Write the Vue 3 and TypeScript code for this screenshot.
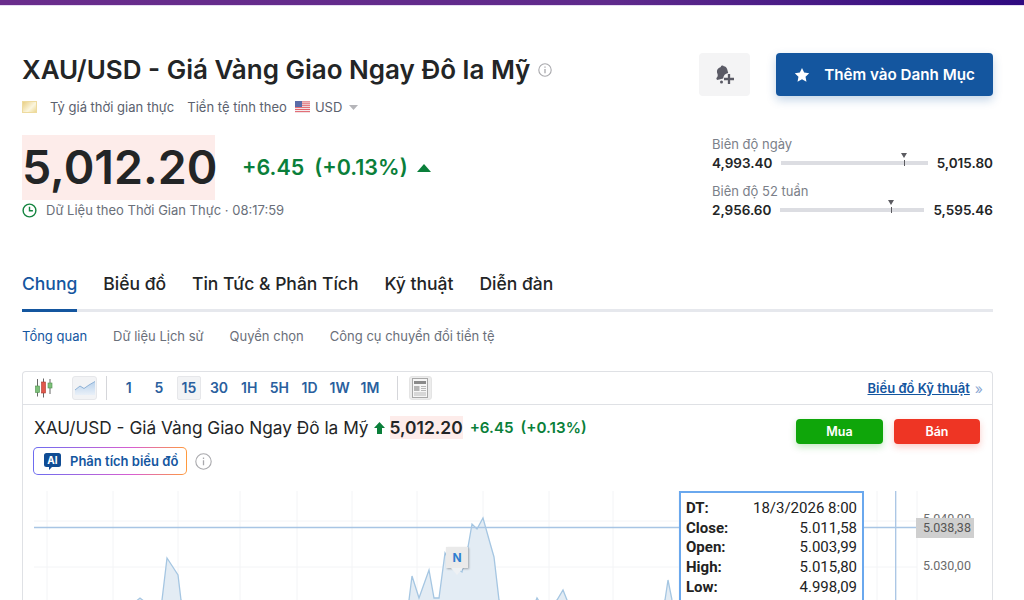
<script setup lang="ts">
const tabs: string[] = ['Chung', 'Biểu đồ', 'Tin Tức & Phân Tích', 'Kỹ thuật', 'Diễn đàn']
const subtabs: string[] = ['Tổng quan', 'Dữ liệu Lịch sử', 'Quyền chọn', 'Công cụ chuyển đổi tiền tệ']
const periods: string[] = ['1', '5', '15', '30', '1H', '5H', '1D', '1W', '1M']
const ranges = [
  { label: 'Biên độ ngày', low: '4,993.40', high: '5,015.80', pos: 84 },
  { label: 'Biên độ 52 tuần', low: '2,956.60', high: '5,595.46', pos: 77 },
]
const tip = [
  ['DT:', '18/3/2026 8:00'],
  ['Close:', '5.011,58'],
  ['Open:', '5.003,99'],
  ['High:', '5.015,80'],
  ['Low:', '4.998,09'],
  ['Vol:', '0'],
]
const vgrid: number[] = [47, 113, 178, 240, 297, 352, 417, 483, 549, 613, 679, 745, 811, 877]
const chartTop = 491
const pts: number[][] = [
  [128, 612], [134, 603], [140, 598], [145, 602], [150, 612], [158, 612], [162, 600], [167, 558], [178, 575], [181, 600], [184, 615],
  [400, 615], [409, 600], [412, 576], [419, 598], [429, 570], [434, 598], [439, 598], [445, 553], [452, 565], [462, 572], [468, 547],
  [472, 524], [477, 529], [483, 518], [490, 543], [494, 557], [499, 600], [502, 615],
  [530, 615], [537, 598], [542, 606], [550, 606], [557, 600], [563, 590], [567, 600], [572, 615],
  [660, 615], [665, 600], [668, 580], [672, 600], [676, 615],
]
const line: string = pts.map((p) => `${p[0] - 23},${p[1] - chartTop}`).join(' ')
</script>

<template>
  <div class="page">
    <div class="topbar"></div>
    <div class="content">
      <header class="header">
        <div class="head-left">
          <div class="title-row">
            <h1 class="title">XAU/USD - Giá Vàng Giao Ngay Đô la Mỹ</h1>
            <svg class="info" width="14" height="14" viewBox="0 0 14 14" fill="none" stroke="#a9a9ad">
              <circle cx="7" cy="7" r="6.2" stroke-width="1.1" />
              <path d="M7 6v4.2M7 3.6v1.2" stroke-width="1.3" />
            </svg>
          </div>
          <div class="meta">
            <span class="gold"></span>
            <span class="meta-a">Tỷ giá thời gian thực</span>
            <span class="meta-b">Tiền tệ tính theo</span>
            <svg class="flag" width="15" height="12" viewBox="0 0 15 12">
              <rect width="15" height="12" fill="#f3eef0" />
              <path d="M0 .9h15M0 2.8h15M0 4.7h15M0 6.6h15M0 8.5h15M0 10.6h15" stroke="#e2626a" stroke-width="1" />
              <rect width="7" height="6" fill="#5a6ba8" />
            </svg>
            <span class="cur">USD</span>
            <svg class="caret" width="9" height="5" viewBox="0 0 9 5"><path d="M0 0h9L4.5 5z" fill="#b5b5b9" /></svg>
          </div>
          <div class="price-row">
            <span class="price">5,012.20</span>
            <span class="chg">+6.45</span>
            <span class="chg pct">(+0.13%)</span>
            <svg class="up" width="14" height="8" viewBox="0 0 14 8"><path d="M7 0l7 8H0z" fill="#0a7f3a" /></svg>
          </div>
          <div class="time">
            <svg width="15" height="15" viewBox="0 0 15 15" fill="none" stroke="#13843f" stroke-width="1.4">
              <circle cx="7.5" cy="7.5" r="6.4" />
              <path d="M7.5 3.8v4h3.4" />
            </svg>
            <span>Dữ Liệu theo Thời Gian Thực · 08:17:59</span>
          </div>
        </div>
        <div class="head-right">
          <div class="actions">
            <button class="bell" type="button">
              <svg width="20" height="20" viewBox="0 0 20 20" fill="#5b5b66">
                <path d="M6 .5c.8-.3 1.500 0 1.800.8 1.800.2 3 1.400 3.400 3l1 3.700a6 6 0 0 0-5 5.500L1 15l-.7-1.800c1.200-1 1.700-2.200 1.300-3.900L1 7.500C.6 5 1.600 3.300 4.800 2c0-.7.500-1.300 1.200-1.500z" />
                <circle cx="5.500" cy="17" r="1.500" />
                <path d="M13 9v10M8 14h10" stroke="#5b5b66" stroke-width="2.300" fill="none" />
              </svg>
            </button>
            <button class="watch" type="button">
              <svg width="16" height="16" viewBox="0 0 24 24" fill="#fff">
                <path d="M12 1.500l3.300 6.900 7.500 1-5.500 5.200 1.400 7.500L12 18.500l-6.700 3.600 1.400-7.500L1.200 9.400l7.500-1z" />
              </svg>
              <span>Thêm vào Danh Mục</span>
            </button>
          </div>
          <div class="ranges">
            <div v-for="r in ranges" :key="r.label" class="range">
              <div class="range-label">{{ r.label }}</div>
              <div class="range-row">
                <b>{{ r.low }}</b>
                <div class="bar">
                  <span class="marker" :style="{ left: r.pos + '%' }"></span>
                  <span class="tick" :style="{ left: r.pos + '%' }"></span>
                </div>
                <b>{{ r.high }}</b>
              </div>
            </div>
          </div>
        </div>
      </header>

      <nav class="tabs">
        <a v-for="(t, i) in tabs" :key="t" class="tab" :class="{ active: i === 0 }">{{ t }}</a>
      </nav>
      <nav class="subtabs">
        <a v-for="(t, i) in subtabs" :key="t" class="subtab" :class="{ active: i === 0 }">{{ t }}</a>
      </nav>

      <section class="box">
        <div class="toolbar">
          <svg class="candles" width="20" height="20" viewBox="0 0 20 20">
            <path d="M3.500 1v17.500M9.500 .5v19M16 1v15" stroke="#666" stroke-width="1" />
            <rect x="1.500" y="8" width="4" height="6.500" fill="#7dc07a" stroke="#4d8f4b" stroke-width=".6" />
            <rect x="7.500" y="4" width="4" height="11" fill="#e2574c" stroke="#a8392f" stroke-width=".6" />
            <rect x="14" y="5" width="4" height="5" fill="#7dc07a" stroke="#4d8f4b" stroke-width=".6" />
          </svg>
          <span class="area-btn">
            <svg width="20" height="14" viewBox="0 0 20 14">
              <defs>
                <linearGradient id="areaFill" x1="0" y1="0" x2="0" y2="1">
                  <stop offset="0" stop-color="#b9d2ec" />
                  <stop offset="1" stop-color="#e9f0f8" />
                </linearGradient>
              </defs>
              <path d="M0 9l5-4 4 2.500 5-3.500 6-3.500V14H0z" fill="url(#areaFill)" />
              <path d="M0 9l5-4 4 2.500 5-3.500 6-3.500" fill="none" stroke="#8fb2d6" />
            </svg>
          </span>
          <span class="sep first"></span>
          <div class="periods">
            <span v-for="p in periods" :key="p" class="period" :class="{ on: p === '15' }">{{ p }}</span>
          </div>
          <span class="sep"></span>
          <span class="news-btn">
            <svg width="16" height="20" viewBox="0 0 16 20">
              <rect x=".5" y=".5" width="15" height="19" fill="#f6f6f6" stroke="#a8a8a8" />
              <rect x="2" y="3" width="12" height="3" fill="#8a8a8a" />
              <rect x="2" y="8" width="5.500" height="5" fill="#b5b5b5" />
              <path d="M9 8.500h5M9 10.500h5M9 12.500h5M2 15h12M2 17h12" stroke="#b8b8b8" />
            </svg>
          </span>
          <a class="tech-link">Biểu đồ Kỹ thuật</a>
          <span class="chev">»</span>
        </div>
        <div class="chart-head">
          <div class="ch-left">
            <div class="ch-title">
              <span class="ch-name">XAU/USD - Giá Vàng Giao Ngay Đô la Mỹ</span>
              <svg width="11" height="12" viewBox="0 0 11 12"><path d="M5.500 0L11 6H8v6H3V6H0z" fill="#0a7f3a" /></svg>
              <span class="ch-price">5,012.20</span>
              <span class="ch-chg">+6.45</span>
              <span class="ch-chg">(+0.13%)</span>
            </div>
            <div class="ai-row">
              <button class="ai" type="button">
                <svg width="17" height="17" viewBox="0 0 17 17">
                  <path d="M2.500 0h12A2.500 2.500 0 0 1 17 2.500v9a2.500 2.500 0 0 1-2.500 2.500H8l-3 3v-3H2.500A2.500 2.500 0 0 1 0 11.500v-9A2.500 2.500 0 0 1 2.500 0z" fill="#0f4c94" />
                  <text x="8.500" y="10.800" text-anchor="middle" fill="#fff" font-size="10" font-weight="700" font-family="Inter, sans-serif">AI</text>
                </svg>
                <span>Phân tích biểu đồ</span>
              </button>
              <svg width="17" height="17" viewBox="0 0 17 17" fill="none" stroke="#a9a9ad">
                <circle cx="8.500" cy="8.500" r="7.700" stroke-width="1.100" />
                <path d="M8.500 7.300v5M8.500 4.400v1.500" stroke-width="1.300" />
              </svg>
            </div>
          </div>
          <div class="trade">
            <button class="buy" type="button">Mua</button>
            <button class="sell" type="button">Bán</button>
          </div>
        </div>
        <div class="chart">
          <svg class="plot" width="969" height="110" viewBox="0 0 969 110">
            <g stroke="#f3f4f6" stroke-width="1">
              <line v-for="x in vgrid" :key="x" :x1="x - 23" :x2="x - 23" y1="0" y2="110" />
              <line x1="11" x2="894" y1="30" y2="30" />
              <line x1="11" x2="894" y1="76" y2="76" />
              <line x1="894" x2="894" y1="0" y2="110" />
            </g>
            <polygon :points="line" fill="#e3ecf4" stroke="#a5c6e2" stroke-width="1.300" />
            <line x1="11" x2="894" y1="36.500" y2="36.500" stroke="#a8c5e4" stroke-width="1.300" />
            <line x1="872.700" x2="872.700" y1="0" y2="110" stroke="#a8c5e4" stroke-width="1.300" />
          </svg>
          <div class="flag-n"><span>N</span></div>
          <span class="axis a1">5.040,00</span>
          <span class="axis a2">5.030,00</span>
          <span class="axis now">5.038,38</span>
          <div class="tooltip">
            <div v-for="row in tip" :key="row[0]" class="tip-row">
              <b>{{ row[0] }}</b><span>{{ row[1] }}</span>
            </div>
          </div>
        </div>
      </section>
    </div>
  </div>
</template>

<style scoped>
.page {
  width: 1024px;
  height: 600px;
  overflow: hidden;
  background: #fff;
  font-family: Inter, "Noto Sans", sans-serif;
  color: #232526;
}
.topbar {
  height: 5px;
  background: linear-gradient(90deg, #6a2d8c 0%, #5f2a8c 60%, #2f0a80 100%);
  box-shadow: 0 1px 0 #e6dcf2;
}
.content {
  padding: 0 31px 0 22px;
}
.header {
  display: flex;
  justify-content: space-between;
  height: 220px;
}
.title-row {
  display: flex;
  align-items: center;
  gap: 8px;
  margin-top: 47px;
  height: 36px;
}
.title {
  margin: 0;
  font-size: 26px;
  line-height: 36px;
  font-weight: 600;
}
.meta {
  display: flex;
  align-items: center;
  margin-top: 7px;
  height: 24px;
  font-size: 13px;
  color: #5b616e;
}
.gold {
  width: 15px;
  height: 12px;
  background: linear-gradient(135deg, #e9cf85 0%, #fbf6df 60%, #ecd894 100%);
  border: 1px solid #eedb9f;
  box-sizing: border-box;
}
.meta-a {
  margin-left: 13px;
}
.meta-b {
  margin-left: 13px;
}
.flag {
  margin-left: 8px;
}
.cur {
  margin-left: 5px;
}
.caret {
  margin-left: 7px;
}
.price-row {
  display: flex;
  align-items: center;
  margin-top: 16px;
  height: 65px;
}
.price {
  background: #fdecea;
  font-size: 46.500px;
  line-height: 65px;
  font-weight: 600;
  width: 193px;
  box-sizing: border-box;
  white-space: nowrap;
}
.chg {
  margin-left: 27px;
  margin-bottom: 2px;
  font-size: 21.500px;
  font-weight: 600;
  color: #0a7f3a;
}
.pct {
  margin-left: 10px;
}
.up {
  margin-left: 9px;
}
.time {
  display: flex;
  align-items: center;
  gap: 9px;
  margin-top: 1px;
  height: 18px;
  font-size: 13px;
  color: #6a6f7a;
}
.head-right {
  width: 294px;
  display: flex;
  flex-direction: column;
  align-items: flex-end;
}
.actions {
  display: flex;
  gap: 26px;
  margin-top: 48px;
}
button {
  border: 0;
  font-family: inherit;
  padding: 0;
}
.bell {
  width: 51px;
  height: 43px;
  padding-left: 3px;
  box-sizing: border-box;
  background: #f4f4f5;
  border-radius: 4px;
  display: flex;
  align-items: center;
  justify-content: center;
}
.watch {
  width: 217px;
  height: 43px;
  background: #14569f;
  border-radius: 4px;
  color: #fff;
  font-size: 15.200px;
  font-weight: 600;
  display: flex;
  align-items: center;
  justify-content: center;
  gap: 14px;
  box-shadow: 0 4px 10px rgba(20, 86, 159, 0.25);
}
.ranges {
  width: 281px;
  margin-top: 39px;
}
.range {
  height: 47px;
}
.range-label {
  font-size: 13px;
  line-height: 18px;
  color: #7b7f89;
}
.range-row {
  display: flex;
  align-items: center;
  justify-content: space-between;
  height: 20px;
  font-size: 13.500px;
}
.range-row b {
  font-weight: 600;
}
.bar {
  position: relative;
  flex: 1;
  height: 4px;
  margin: 0 9px;
  background: #dcdde2;
}
.marker {
  position: absolute;
  top: -8px;
  margin-left: -3px;
  width: 0;
  height: 0;
  border-left: 3.500px solid transparent;
  border-right: 3.500px solid transparent;
  border-top: 5px solid #5b5b60;
}
.tick {
  position: absolute;
  top: -1px;
  width: 1px;
  height: 6px;
  background: #5b5b60;
}
.tabs {
  display: flex;
  gap: 26px;
  height: 39px;
  margin-top: 45px;
  border-bottom: 3px solid #e6e8ed;
}
.tab {
  font-size: 17.500px;
  line-height: 28px;
  font-weight: 500;
  height: 39px;
}
.tab.active {
  color: #14569f;
  border-bottom: 3px solid #14569f;
}
.subtabs {
  display: flex;
  gap: 26px;
  margin-top: 14px;
  height: 20px;
  font-size: 13px;
  line-height: 20px;
  color: #6a6f7a;
}
.subtab.active {
  color: #14569f;
}
.box {
  margin-top: 25px;
  border: 1px solid #dfe1e5;
  border-bottom: 0;
  border-radius: 4px 4px 0 0;
  height: 240px;
  box-sizing: border-box;
}
.toolbar {
  display: flex;
  align-items: center;
  height: 32px;
  border-bottom: 1px solid #dfe1e5;
  padding-left: 11px;
  padding-right: 9px;
}
.area-btn {
  margin-left: 18px;
  width: 25px;
  height: 24px;
  background: #f2f3f5;
  border: 1px solid #e6e7ea;
  border-radius: 3px;
  box-sizing: border-box;
  display: flex;
  align-items: center;
  justify-content: center;
}
.sep {
  width: 1px;
  height: 24px;
  background: #d5d6da;
}
.sep.first {
  margin-left: 9px;
}
.periods {
  display: flex;
  margin: 0 11.500px 0 6.500px;
}
.period {
  width: 30.200px;
  height: 24px;
  line-height: 24px;
  text-align: center;
  font-size: 14px;
  font-weight: 600;
  color: #2a5f9e;
  box-sizing: border-box;
  border-radius: 2px;
}
.period.on {
  width: 24px;
  margin: 0 3px;
  background: #f2f3f5;
  border: 1px solid #e6e7ea;
  line-height: 22px;
}
.news-btn {
  margin-left: 11px;
  width: 23px;
  height: 24px;
  background: #ececec;
  border: 1px solid #e4e4e4;
  box-sizing: border-box;
  border-radius: 3px;
  display: flex;
  align-items: center;
  justify-content: center;
}
.tech-link {
  margin-left: auto;
  font-size: 13px;
  font-weight: 600;
  color: #14569f;
  text-decoration: underline;
}
.chev {
  margin-left: 5px;
  font-size: 14px;
  color: #8aa7d2;
}
.chart-head {
  display: flex;
  justify-content: space-between;
  height: 86px;
  padding: 11px 12px 0 11px;
  box-sizing: border-box;
}
.ch-title {
  display: flex;
  align-items: center;
  height: 23px;
}
.ch-name {
  font-size: 17.250px;
  font-weight: 400;
  margin-right: 5px;
}
.ch-price {
  margin-left: 5px;
  background: #fdecea;
  font-size: 17.400px;
  font-weight: 600;
  line-height: 23px;
}
.ch-chg {
  margin-left: 7px;
  font-size: 15.200px;
  font-weight: 600;
  color: #0a7f3a;
}
.ai-row {
  display: flex;
  align-items: center;
  gap: 8px;
  margin-top: 8px;
  margin-left: -1px;
}
.ai {
  display: flex;
  align-items: center;
  gap: 9px;
  width: 154px;
  height: 28px;
  padding-left: 10px;
  box-sizing: border-box;
  border: 1px solid transparent;
  border-radius: 5px;
  background: linear-gradient(#fff, #fff) padding-box, linear-gradient(90deg, #6d6cf0, #d95fd0 65%, #ff9a3c) border-box;
  color: #14569f;
  font-size: 13px;
  font-weight: 600;
  white-space: nowrap;
}
.trade {
  display: flex;
  gap: 11px;
  margin-top: 3px;
}
.buy,
.sell {
  width: 87px;
  height: 25px;
  border-radius: 4px;
  color: #fff;
  font-size: 12.500px;
  font-weight: 600;
}
.sell {
  width: 86px;
  background: #ee3524;
  box-shadow: 0 3px 7px rgba(238, 53, 36, 0.25);
}
.buy {
  background: #0fa60a;
  box-shadow: 0 3px 7px rgba(15, 166, 10, 0.25);
}
.chart {
  position: relative;
  height: 109px;
  overflow: hidden;
  font-family: Roboto, sans-serif;
}
.plot {
  position: absolute;
  left: 0;
  top: 0;
}
.flag-n {
  position: absolute;
  left: 423px;
  top: 56px;
  width: 22px;
  height: 21px;
  background: #eaeaea;
  box-shadow: 1px 1px 2px rgba(0, 0, 0, 0.3);
  text-align: center;
  font: 700 12px/21px Inter, sans-serif;
  color: #2f7fd0;
}
.flag-n::after {
  content: "";
  position: absolute;
  left: 5px;
  top: 21px;
  border-left: 6px solid transparent;
  border-right: 6px solid transparent;
  border-top: 7px solid #eef1f4;
}
.axis {
  position: absolute;
  left: 900px;
  font-size: 12.500px;
  line-height: 16px;
  color: #6b6b6b;
}
.a1 {
  top: 20px;
}
.a2 {
  top: 67px;
}
.now {
  left: 893px;
  top: 27px;
  width: 58px;
  height: 20px;
  line-height: 20px;
  box-sizing: border-box;
  padding-left: 7px;
  background: #cfcfcf;
  color: #555;
}
.tooltip {
  position: absolute;
  left: 656px;
  top: 0;
  width: 185px;
  box-sizing: border-box;
  padding: 6px 5px;
  background: #fff;
  border: 2px solid #6aa8ee;
  font-size: 15px;
  line-height: 19.700px;
  color: #222;
}
.tip-row {
  display: flex;
  justify-content: space-between;
}
.tip-row b {
  font-weight: 700;
}
</style>
